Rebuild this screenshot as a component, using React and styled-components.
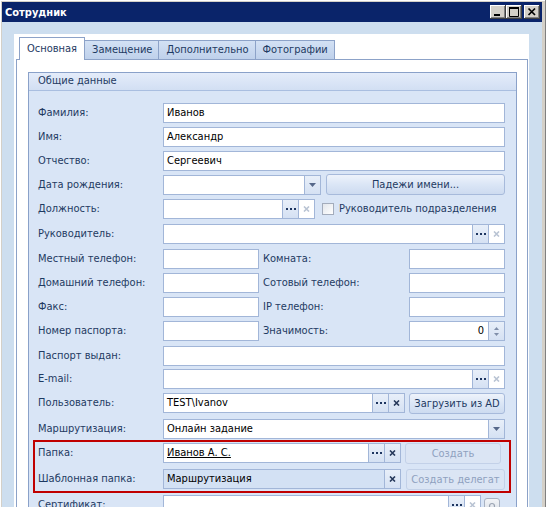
import React from 'react';
import styled, { createGlobalStyle, css } from 'styled-components';

const FONT = `"DejaVu Sans Condensed", "Liberation Sans", sans-serif`;

const GlobalStyle = createGlobalStyle`
  html, body { margin: 0; padding: 0; background: #d4d0c8; }
  body { font-family: ${FONT}; font-size: 11px; }
  * { box-sizing: border-box; }
`;

const Window = styled.div`
  width: 546px;
  height: 507px;
  overflow: hidden;
  background: #d4d0c8;
  padding: 2px 4px 0 2px;
  display: flex;
  flex-direction: column;
  box-shadow: inset -1px 0 #808080, inset 1px 1px #ffffff;
`;

const TitleBar = styled.div`
  height: 20px;
  flex: none;
  background: #0a246a;
  display: flex;
  align-items: center;
  justify-content: space-between;
  padding: 0 2px 0 3px;
`;

const Title = styled.div`
  color: #fff;
  font-weight: bold;
  font-size: 11px;
`;

const TitleButtons = styled.div`
  display: flex;
  align-items: center;
`;

const TitleButton = styled.div`
  width: 16px;
  height: 14px;
  background: #d4d0c8;
  margin-left: ${p => p.$gap || 0}px;
  box-shadow: inset -1px -1px #404040, inset 1px 1px #ffffff, inset -2px -2px #808080;
  display: flex;
`;

const Client = styled.div`
  flex: 1;
  min-height: 0;
  background: #cddeef;
  padding: 12px 13px 0 12px;
  display: flex;
`;

const FormArea = styled.div`
  flex: 1;
  background: #fff;
  padding: 3px 1px 0 2px;
  display: flex;
  flex-direction: column;
`;

const TabStrip = styled.div`
  height: 22px;
  flex: none;
  display: flex;
  align-items: flex-end;
  padding-left: 3px;
`;

const Tab = styled.div`
  position: relative;
  border: 1px solid #8ca2c8;
  border-bottom: none;
  color: #1e3a62;
  white-space: nowrap;
  margin-left: -1px;
  &:first-child { margin-left: 0; }
  ${p => p.$active ? css`
    padding: 0 7px;
    height: 23px;
    line-height: 21px;
    margin-bottom: -1px;
    background: #fff;
    z-index: 1;
  ` : css`
    padding: 0 6px 0 7px;
    height: 19px;
    line-height: 18px;
    background: linear-gradient(#d3e1f4, #bfd1eb);
  `}
`;

const TabPanel = styled.div`
  flex: 1;
  border: 1px solid #8ca2c8;
  border-bottom: none;
  background: #fff;
  padding: 12px 10px 0 11px;
  display: flex;
  flex-direction: column;
`;

const Group = styled.div`
  flex: 1;
  border: 1px solid #8aa1c9;
  border-bottom: none;
  background: #d9e5f6;
  display: flex;
  flex-direction: column;
`;

const GroupHeader = styled.div`
  height: 18px;
  flex: none;
  padding-left: 9px;
  line-height: 16px;
  color: #1e3a62;
  background: linear-gradient(#e4ecfa, #d2dff3);
  border-bottom: 1px solid #a9bee0;
`;

const GroupBody = styled.div`
  padding: 12px 11px 0 9px;
`;

const Row = styled.div`
  display: flex;
  align-items: flex-start;
  height: ${p => p.$h ?? 24}px;
`;

const Label = styled.div`
  width: ${p => p.$w ?? 125}px;
  flex: none;
  height: 20px;
  line-height: 20px;
  color: #1e3a62;
  white-space: nowrap;
  padding-left: ${p => p.$pl ?? 0}px;
`;

const Field = styled.div`
  height: 20px;
  ${p => p.$w ? css`width: ${p.$w}px; flex: none;` : css`flex: 1;`}
  display: flex;
  border: 1px solid #a2b6d8;
  background: ${p => p.$readonly ? '#d3e1f4' : '#fff'};
  overflow: hidden;
`;

const FieldText = styled.div`
  flex: 1;
  min-width: 0;
  padding: 0 ${p => p.$right ? 4 : 3}px 0 3px;
  line-height: 18px;
  color: #000;
  white-space: nowrap;
  text-align: ${p => p.$right ? 'right' : 'left'};
  ${p => p.$link && css`text-decoration: underline;`}
`;

const EditButton = styled.div`
  width: 16px;
  flex: none;
  border-left: 1px solid #a2b6d8;
  background: ${p => p.$plain ? '#fff' : 'linear-gradient(#e8eff9, #d5e1f3)'};
  display: flex;
  flex-direction: column;
  align-items: center;
  justify-content: center;
  gap: 3px;
`;

const PushButton = styled.div`
  height: 21px;
  ${p => p.$w ? css`width: ${p.$w}px; flex: none;` : css`flex: 1;`}
  margin-left: ${p => p.$ml ?? 0}px;
  margin-top: ${p => p.$mt ?? 0}px;
  border: 1px solid ${p => p.$disabled ? '#c3d1e8' : '#a7badb'};
  border-radius: 3px;
  background: ${p => p.$disabled ? '#dbe5f4' : 'linear-gradient(#eef3fb, #dbe6f6 50%, #cddbf0)'};
  color: ${p => p.$disabled ? '#8fa1bf' : '#1e3a62'};
  display: flex;
  align-items: center;
  justify-content: center;
  white-space: nowrap;
`;

const CheckBox = styled.div`
  width: 12px;
  height: 12px;
  flex: none;
  margin: 4px 5px 0 7px;
  border: 1px solid #a3acbc;
  background: linear-gradient(135deg, #e2e6ec, #ffffff);
`;

const CheckLabel = styled.div`
  height: 20px;
  line-height: 20px;
  color: #1e3a62;
  white-space: nowrap;
`;

const Highlight = styled.div`
  margin: 0 -6px 2px -5px;
  padding: 1px 4px 0 3px;
  border: 2px solid #c00000;
`;

const IconButton = styled.div`
  width: 16px;
  height: 16px;
  flex: none;
  margin: 3px 0 0 3px;
  border: 1px solid #a9b2c2;
  border-radius: 3px;
  background: linear-gradient(#f2f4f7, #d9dee6);
  display: flex;
  align-items: center;
  justify-content: center;
`;

const Dots = () => (
  <svg width="10" height="2" viewBox="0 0 10 2">
    <rect x="0" y="0" width="2" height="2" fill="#1d3560" />
    <rect x="4" y="0" width="2" height="2" fill="#1d3560" />
    <rect x="8" y="0" width="2" height="2" fill="#1d3560" />
  </svg>
);

const Cross = ({ on }) => (
  <svg width="7" height="6" viewBox="0 0 7 6">
    <path d="M1 0.5L6 5.5M6 0.5L1 5.5" stroke={on ? '#26385a' : '#b9c3d3'} strokeWidth="1.6" />
  </svg>
);

const DropArrow = () => (
  <svg width="7" height="4" viewBox="0 0 7 4">
    <path d="M0 0H7L3.5 4Z" fill="#56688a" />
  </svg>
);

const SpinArrow = ({ down }) => (
  <svg width="5" height="3" viewBox="0 0 5 3">
    <path d={down ? 'M0 0H5L2.5 3Z' : 'M0 3H5L2.5 0Z'} fill="#7f8ea9" />
  </svg>
);

const DotsBtn = () => <EditButton><Dots /></EditButton>;
const ClearBtn = ({ on }) => <EditButton $plain={!on}><Cross on={on} /></EditButton>;
const DropBtn = () => <EditButton><DropArrow /></EditButton>;

export default function App() {
  return (
    <>
      <GlobalStyle />
      <Window>
        <TitleBar>
          <Title>Сотрудник</Title>
          <TitleButtons>
            <TitleButton>
              <svg width="16" height="14" viewBox="0 0 16 14"><rect x="4" y="9" width="6" height="2" fill="#000" /></svg>
            </TitleButton>
            <TitleButton>
              <svg width="16" height="14" viewBox="0 0 16 14"><path d="M3 2H12V11H3Z" fill="none" stroke="#000" strokeWidth="1" transform="translate(0.5 0.5)" /><rect x="3" y="2" width="10" height="2" fill="#000" /></svg>
            </TitleButton>
            <TitleButton $gap={2}>
              <svg width="16" height="14" viewBox="0 0 16 14"><path d="M4.5 3.5L11 10M11 3.5L4.5 10" stroke="#000" strokeWidth="1.7" /></svg>
            </TitleButton>
          </TitleButtons>
        </TitleBar>
        <Client>
          <FormArea>
            <TabStrip>
              <Tab $active>Основная</Tab>
              <Tab>Замещение</Tab>
              <Tab>Дополнительно</Tab>
              <Tab>Фотографии</Tab>
            </TabStrip>
            <TabPanel>
              <Group>
                <GroupHeader>Общие данные</GroupHeader>
                <GroupBody>
                  <Row>
                    <Label>Фамилия:</Label>
                    <Field><FieldText>Иванов</FieldText></Field>
                  </Row>
                  <Row>
                    <Label>Имя:</Label>
                    <Field><FieldText>Александр</FieldText></Field>
                  </Row>
                  <Row>
                    <Label>Отчество:</Label>
                    <Field><FieldText>Сергеевич</FieldText></Field>
                  </Row>
                  <Row>
                    <Label>Дата рождения:</Label>
                    <Field $w={158}><FieldText /><DropBtn /></Field>
                    <PushButton $ml={5} $mt={-1}>Падежи имени...</PushButton>
                  </Row>
                  <Row $h={25}>
                    <Label>Должность:</Label>
                    <Field $w={152}><FieldText /><DotsBtn /><ClearBtn /></Field>
                    <CheckBox />
                    <CheckLabel>Руководитель подразделения</CheckLabel>
                  </Row>
                  <Row $h={25}>
                    <Label>Руководитель:</Label>
                    <Field><FieldText /><DotsBtn /><ClearBtn /></Field>
                  </Row>
                  <Row>
                    <Label>Местный телефон:</Label>
                    <Field $w={96}><FieldText /></Field>
                    <Label $w={150} $pl={4}>Комната:</Label>
                    <Field><FieldText /></Field>
                  </Row>
                  <Row>
                    <Label>Домашний телефон:</Label>
                    <Field $w={96}><FieldText /></Field>
                    <Label $w={150} $pl={4}>Сотовый телефон:</Label>
                    <Field><FieldText /></Field>
                  </Row>
                  <Row>
                    <Label>Факс:</Label>
                    <Field $w={96}><FieldText /></Field>
                    <Label $w={150} $pl={4}>IP телефон:</Label>
                    <Field><FieldText /></Field>
                  </Row>
                  <Row $h={25}>
                    <Label>Номер паспорта:</Label>
                    <Field $w={96}><FieldText /></Field>
                    <Label $w={150} $pl={4}>Значимость:</Label>
                    <Field>
                      <FieldText $right>0</FieldText>
                      <EditButton><SpinArrow /><SpinArrow down /></EditButton>
                    </Field>
                  </Row>
                  <Row $h={23}>
                    <Label>Паспорт выдан:</Label>
                    <Field><FieldText /></Field>
                  </Row>
                  <Row>
                    <Label>E-mail:</Label>
                    <Field><FieldText /><DotsBtn /><ClearBtn /></Field>
                  </Row>
                  <Row $h={26}>
                    <Label>Пользователь:</Label>
                    <Field $w={242}><FieldText>TEST\Ivanov</FieldText><DotsBtn /><ClearBtn on /></Field>
                    <PushButton $ml={4}>Загрузить из AD</PushButton>
                  </Row>
                  <Row $h={21}>
                    <Label>Маршрутизация:</Label>
                    <Field><FieldText>Онлайн задание</FieldText><DropBtn /></Field>
                  </Row>
                  <Highlight>
                    <Row $h={26}>
                      <Label>Папка:</Label>
                      <Field $w={238}><FieldText $link>Иванов А. С.</FieldText><DotsBtn /><ClearBtn on /></Field>
                      <PushButton $ml={4} $w={96} $disabled>Создать</PushButton>
                    </Row>
                    <Row $h={22}>
                      <Label>Шаблонная папка:</Label>
                      <Field $w={238} $readonly><FieldText>Маршрутизация</FieldText><EditButton $plain={false}><Cross on /></EditButton></Field>
                      <PushButton $ml={5} $disabled>Создать делегат</PushButton>
                    </Row>
                  </Highlight>
                  <Row>
                    <Label>Сертификат:</Label>
                    <Field $w={318}><FieldText /><DotsBtn /><ClearBtn /></Field>
                    <IconButton>
                      <svg width="8" height="8" viewBox="0 0 8 8"><circle cx="4" cy="4" r="2.5" fill="none" stroke="#9aa3b2" strokeWidth="1.2" /></svg>
                    </IconButton>
                  </Row>
                </GroupBody>
              </Group>
            </TabPanel>
          </FormArea>
        </Client>
      </Window>
    </>
  );
}
